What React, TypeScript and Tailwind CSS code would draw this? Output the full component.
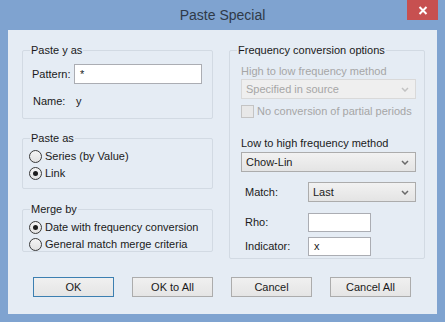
import React from "react";

const clientBg = "bg-[#e5ecf4]";

function Group({ title, className, children }: { title: string; className?: string; children: React.ReactNode }) {
  return (
    <div className={`relative border border-[#d2dae3] rounded-[2px] ${className ?? ""}`}>
      <span className={`absolute left-[7px] -top-[7px] px-[1px] leading-[13px] ${clientBg}`}>{title}</span>
      {children}
    </div>
  );
}

function Radio({ checked, label }: { checked?: boolean; label: string }) {
  return (
    <div className="flex items-center h-[17px]">
      <div className="w-[13px] h-[13px] rounded-full border border-[#3a3a3a] bg-gradient-to-b from-[#f4f4f4] to-[#e2e2e2] flex items-center justify-center">
        {checked && <div className="w-[5px] h-[5px] rounded-full bg-[#1c1c1c]" />}
      </div>
      <span className="ml-[3px] leading-[13px]">{label}</span>
    </div>
  );
}

function Chevron({ disabled }: { disabled?: boolean }) {
  return (
    <svg width="8" height="5" viewBox="0 0 8 5" className="shrink-0">
      <path d="M1 1 L4 4 L7 1" fill="none" stroke={disabled ? "#c2c2c2" : "#6a6a6a"} strokeWidth="1.5" />
    </svg>
  );
}

function Select({ value, disabled, className }: { value: string; disabled?: boolean; className?: string }) {
  return (
    <div
      className={`h-[20px] flex items-center justify-between pl-[4px] pr-[6px] border ${
        disabled
          ? "border-[#d9d9d9] bg-[#efefef] text-[#a6a6a6]"
          : "border-[#acacac] bg-gradient-to-b from-[#f2f2f2] to-[#e4e4e4]"
      } ${className ?? ""}`}
    >
      <span className="leading-[13px]">{value}</span>
      <Chevron disabled={disabled} />
    </div>
  );
}

function TextBox({ value, className }: { value?: string; className?: string }) {
  return (
    <div className={`bg-white border border-[#abadb3] flex items-center pl-[5px] ${className ?? ""}`}>
      <span className="leading-[13px]">{value}</span>
    </div>
  );
}

function DialogButton({ label, primary }: { label: string; primary?: boolean }) {
  return (
    <button
      className={`w-[81px] h-[20px] border ${
        primary ? "border-[#3c7fb1]" : "border-[#acacac]"
      } bg-gradient-to-b from-[#f0f0f0] to-[#e5e5e5] leading-[13px] text-[11px]`}
    >
      {label}
    </button>
  );
}

export default function App() {
  return (
    <div className="w-[445px] h-[322px] bg-[#7fa3d0] flex flex-col font-['Liberation_Sans',Arial,sans-serif] text-[11px] text-[#1a1a1a]">
      {/* title bar */}
      <div className="h-[30px] grid grid-cols-[1fr_auto_1fr]">
        <div />
        <div className="self-center text-[14px] text-[#2f3a48] leading-[18px] pb-[1px]">Paste Special</div>
        <div className="justify-self-end pr-[7px]">
          <div className="w-[31px] h-[20px] bg-[#c75050] flex items-center justify-center">
            <svg width="10" height="9" viewBox="0 0 10 9">
              <path d="M1.5 1 L8.5 8 M8.5 1 L1.5 8" stroke="white" strokeWidth="2" />
            </svg>
          </div>
        </div>
      </div>

      {/* client area */}
      <div className={`mx-[8px] h-[284px] ${clientBg} flex flex-col`}>
        <div className="flex gap-[16px] pl-[14px] pt-[20px]">
          {/* left column */}
          <div className="w-[191px] flex flex-col">
            <Group title="Paste y as" className="h-[69px]">
              <div className="flex items-center pl-[9px] mt-[13px]">
                <span className="w-[42px] leading-[13px]">Pattern:</span>
                <TextBox value="*" className="w-[128px] h-[20px]" />
              </div>
              <div className="flex items-center pl-[10px] mt-[11px]">
                <span className="w-[43px] leading-[13px]">Name:</span>
                <span className="leading-[13px]">y</span>
              </div>
            </Group>

            <Group title="Paste as" className="h-[51px] mt-[19px]">
              <div className="pl-[6px] pt-[9px]">
                <Radio label="Series (by Value)" />
                <Radio label="Link" checked />
              </div>
            </Group>

            <Group title="Merge by" className="h-[43px] mt-[20px]">
              <div className="pl-[6px] pt-[9px]">
                <Radio label="Date with frequency conversion" checked />
                <Radio label="General match merge criteria" />
              </div>
            </Group>
          </div>

          {/* right column */}
          <Group title="Frequency conversion options" className="w-[196px] h-[209px]">
            <div className="flex flex-col pl-[11px] pt-[14px]">
              <span className="leading-[13px] text-[#a6a6a6]">High to low frequency method</span>
              <Select value="Specified in source" disabled className="w-[175px] mt-[1px]" />
              <div className="flex items-center mt-[6px]">
                <div className="w-[13px] h-[13px] border border-[#c4c4c4] bg-[#e8e8e8]" />
                <span className="ml-[3px] leading-[13px] text-[#a6a6a6]">No conversion of partial periods</span>
              </div>
              <span className="leading-[13px] mt-[19px]">Low to high frequency method</span>
              <Select value="Chow-Lin" className="w-[175px] mt-[2px]" />
              <div className="flex items-center mt-[10px]">
                <span className="w-[67px] pl-[4px] leading-[13px]">Match:</span>
                <Select value="Last" className="w-[108px]" />
              </div>
              <div className="flex items-center mt-[11px]">
                <span className="w-[67px] pl-[4px] leading-[13px]">Rho:</span>
                <TextBox className="w-[63px] h-[19px]" />
              </div>
              <div className="flex items-center mt-[5px]">
                <span className="w-[67px] pl-[4px] leading-[13px]">Indicator:</span>
                <TextBox value="x" className="w-[63px] h-[19px]" />
              </div>
            </div>
          </Group>
        </div>

        {/* buttons */}
        <div className="flex gap-[18px] pl-[25px] mt-[18px]">
          <DialogButton label="OK" primary />
          <DialogButton label="OK to All" />
          <DialogButton label="Cancel" />
          <DialogButton label="Cancel All" />
        </div>
      </div>
    </div>
  );
}
